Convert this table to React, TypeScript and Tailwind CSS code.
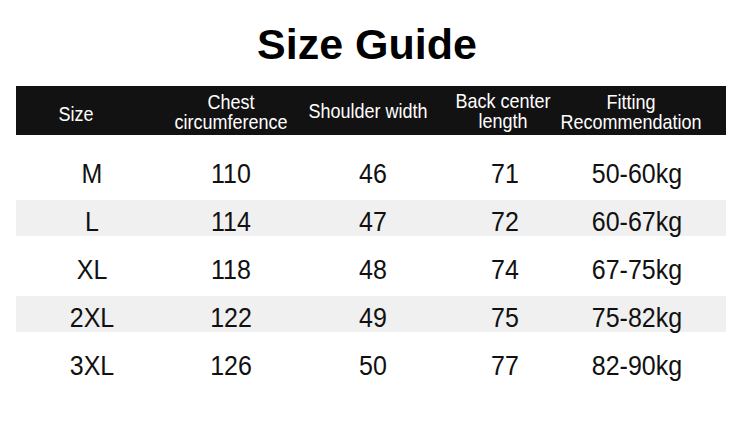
import React from "react";

const rows = [
  ["M", "110", "46", "71", "50-60kg"],
  ["L", "114", "47", "72", "60-67kg"],
  ["XL", "118", "48", "74", "67-75kg"],
  ["2XL", "122", "49", "75", "75-82kg"],
  ["3XL", "126", "50", "77", "82-90kg"],
];

const dataPad = ["pr-[0px]", "pr-[0px]", "pr-[0px]", "pr-[0px]", "pr-[10px]"];

export default function App() {
  return (
    <div className="w-[750px] h-[421px] bg-white overflow-hidden font-['Liberation_Sans',Arial,sans-serif]">
      <h1 className="mt-[23px] w-full text-center pr-[16px] text-[43px] leading-[43px] font-bold text-black">
        Size Guide
      </h1>
      <div className="ml-[16px] mt-[20px] w-[710px]">
        <div className="grid h-[49px] grid-cols-[152px_126px_158px_106px_168px] bg-[#121212] text-[18px] leading-[20px] text-white">
          <div className="flex items-center justify-center pr-[32px] pt-[8px]">
            <span className="scale-y-[1.08]">Size</span>
          </div>
          <div className="flex flex-col items-center justify-center pt-[4px] text-center">
            <span className="scale-y-[1.08]">Chest</span>
            <span className="scale-y-[1.08]">circumference</span>
          </div>
          <div className="flex items-center justify-center pr-[10px] pt-[2px]">
            <span className="scale-y-[1.08]">Shoulder width</span>
          </div>
          <div className="flex flex-col items-center justify-center pr-[4px] pt-[3px] text-center">
            <span className="scale-y-[1.08]">Back center</span>
            <span className="scale-y-[1.08]">length</span>
          </div>
          <div className="flex flex-col items-center justify-center pr-[22px] pt-[4px] text-center">
            <span className="scale-y-[1.08]">Fitting</span>
            <span className="scale-y-[1.08]">Recommendation</span>
          </div>
        </div>
        <div className="mt-[11px]">
          {rows.map((r, i) => (
            <div key={r[0]} className="py-[6px]">
              <div
                className={
                  "grid h-[36px] grid-cols-[152px_126px_158px_106px_168px] text-[25px] leading-[30px] text-[#111] " +
                  (i % 2 === 1 ? "bg-[#f0f0f0]" : "bg-white")
                }
              >
                {r.map((c, j) => (
                  <div key={j} className={"flex items-center justify-center pt-[6px] " + dataPad[j]}>
                    <span className="scale-y-[1.1]">{c}</span>
                  </div>
                ))}
              </div>
            </div>
          ))}
        </div>
      </div>
    </div>
  );
}
